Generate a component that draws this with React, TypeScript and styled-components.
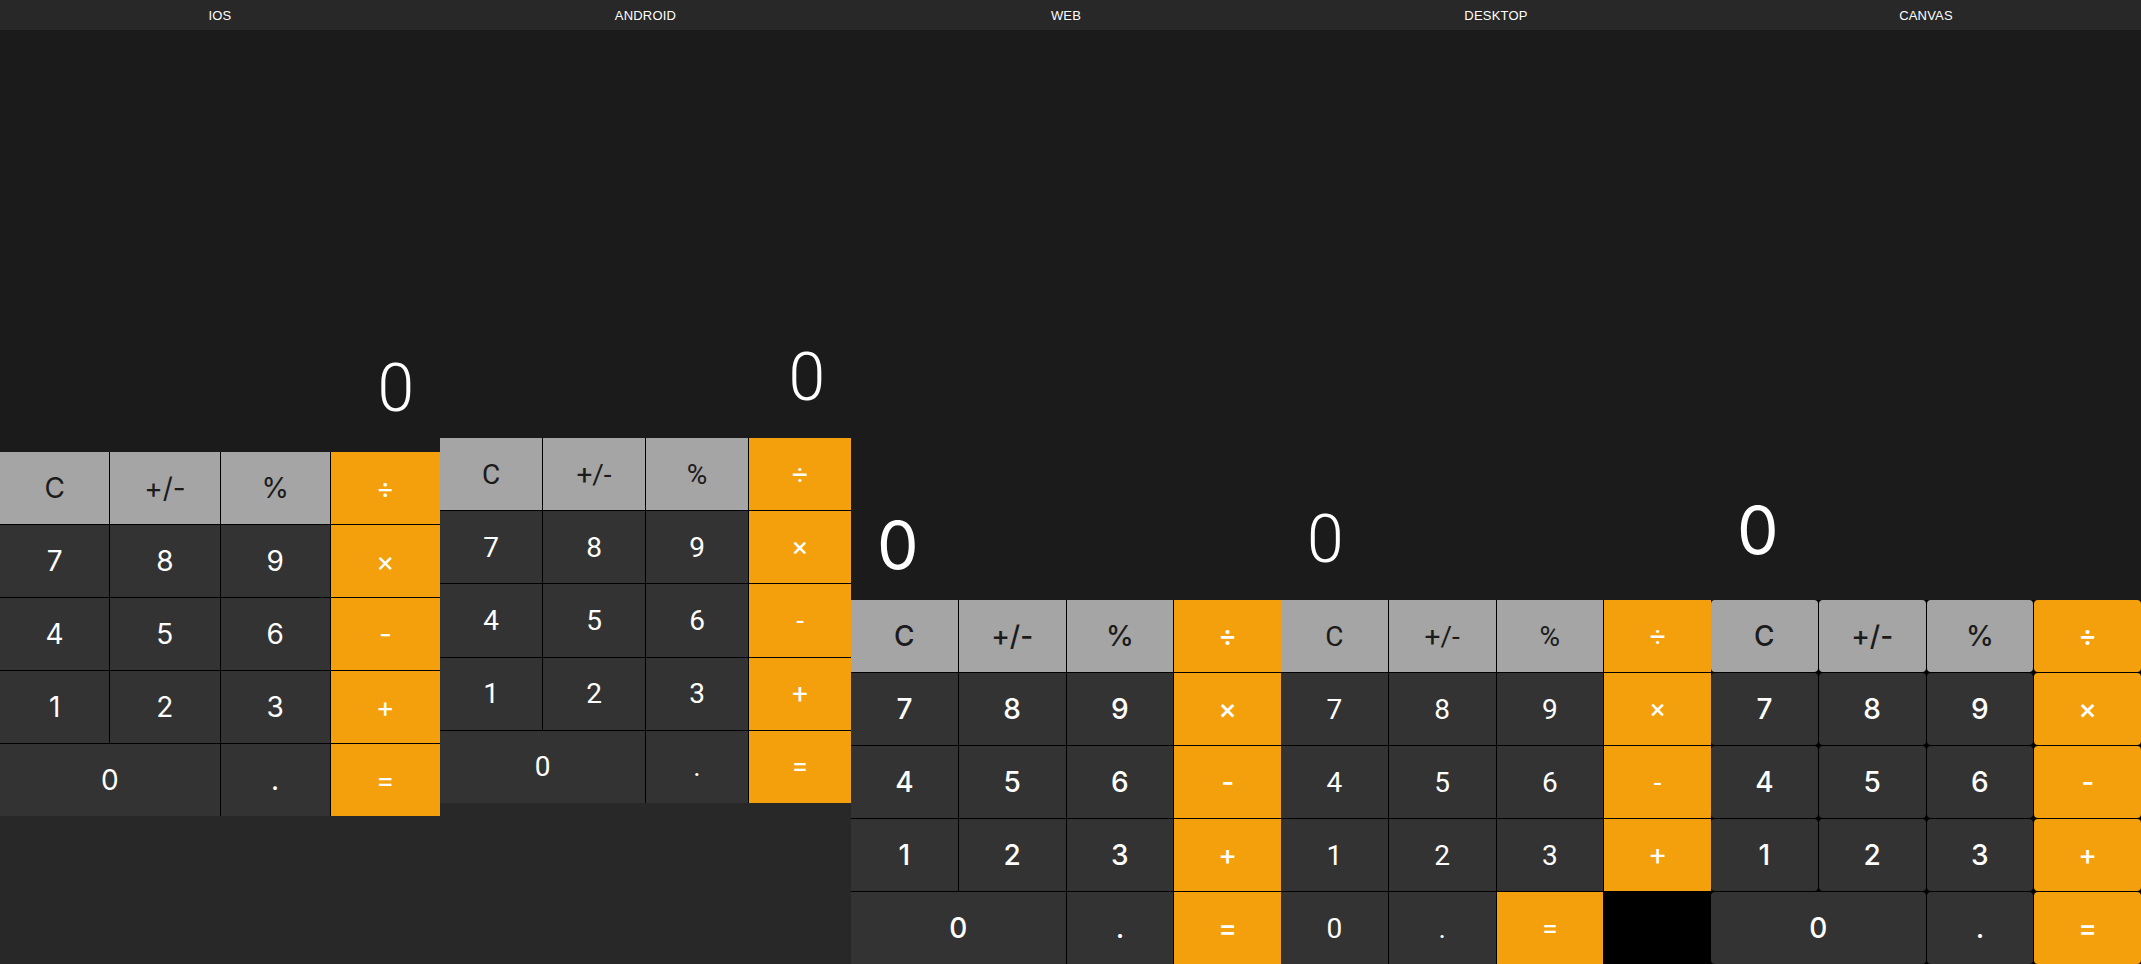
import * as React from 'react'
import styled, { createGlobalStyle } from 'styled-components'

const GlobalStyle = createGlobalStyle`
  html, body {
    margin: 0;
    padding: 0;
    background: #282828;
    font-family: 'Liberation Sans', Arial, sans-serif;
  }
  #root {
    height: 100vh;
  }
`

type KeyKind = 'fn' | 'num' | 'op' | 'blank'

interface IKey {
  label: string
  kind: KeyKind
  span?: number
}

interface IPlatform {
  name: string
  width: number
  displayHeight: number
  rowHeight: number
  align: 'left' | 'right'
  displayFont: string
  displayWeight: number
  displayPadBottom: number
  keyFont: string
  keyWeight: number
  rounded?: boolean
  keys: IKey[]
}

const topRows: IKey[] = [
  { label: 'C', kind: 'fn' },
  { label: '+/-', kind: 'fn' },
  { label: '%', kind: 'fn' },
  { label: '÷', kind: 'op' },
  { label: '7', kind: 'num' },
  { label: '8', kind: 'num' },
  { label: '9', kind: 'num' },
  { label: '×', kind: 'op' },
  { label: '4', kind: 'num' },
  { label: '5', kind: 'num' },
  { label: '6', kind: 'num' },
  { label: '-', kind: 'op' },
  { label: '1', kind: 'num' },
  { label: '2', kind: 'num' },
  { label: '3', kind: 'num' },
  { label: '+', kind: 'op' }
]

const wideZeroRow: IKey[] = [
  { label: '0', kind: 'num', span: 2 },
  { label: '.', kind: 'num' },
  { label: '=', kind: 'op' }
]

// desktop build leaves the last cell empty
const desktopZeroRow: IKey[] = [
  { label: '0', kind: 'num' },
  { label: '.', kind: 'num' },
  { label: '=', kind: 'op' },
  { label: '', kind: 'blank' }
]

const platforms: IPlatform[] = [
  {
    name: 'IOS',
    width: 440,
    displayHeight: 422,
    rowHeight: 72,
    align: 'right',
    displayFont: 'Roboto',
    displayWeight: 300,
    displayPadBottom: 30,
    keyFont: 'Inter',
    keyWeight: 400,
    keys: topRows.concat(wideZeroRow)
  },
  {
    name: 'ANDROID',
    width: 411,
    displayHeight: 408,
    rowHeight: 72.2,
    align: 'right',
    displayFont: 'Roboto',
    displayWeight: 300,
    displayPadBottom: 27,
    keyFont: 'Roboto',
    keyWeight: 400,
    keys: topRows.concat(wideZeroRow)
  },
  {
    name: 'WEB',
    width: 430,
    displayHeight: 570,
    rowHeight: 72,
    align: 'left',
    displayFont: 'Inter',
    displayWeight: 400,
    displayPadBottom: 22,
    keyFont: 'Inter',
    keyWeight: 500,
    keys: topRows.concat(wideZeroRow)
  },
  {
    name: 'DESKTOP',
    width: 430,
    displayHeight: 570,
    rowHeight: 72,
    align: 'left',
    displayFont: 'Roboto',
    displayWeight: 300,
    displayPadBottom: 27,
    keyFont: 'Roboto',
    keyWeight: 400,
    keys: topRows.concat(desktopZeroRow)
  },
  {
    name: 'CANVAS',
    width: 430,
    displayHeight: 570,
    rowHeight: 72,
    align: 'left',
    displayFont: 'Inter',
    displayWeight: 400,
    displayPadBottom: 37,
    keyFont: 'Inter',
    keyWeight: 500,
    rounded: true,
    keys: topRows.concat(wideZeroRow)
  }
]

const Page = styled('div')`
  display: flex;
  flex-direction: row;
  align-items: stretch;
  height: 100%;
  background: #282828;
  overflow: hidden;
`

const Panel = styled('div')<{ $width: number }>`
  display: flex;
  flex-direction: column;
  width: ${p => p.$width}px;
  flex: 0 0 ${p => p.$width}px;
`

const Tab = styled('div')`
  height: 30px;
  display: flex;
  align-items: center;
  justify-content: center;
  background: #282828;
  color: #ffffff;
  font-family: 'Liberation Sans', Arial, sans-serif;
  font-size: 13px;
  letter-spacing: 0.2px;
`

const Display = styled('div')<{ $height: number, $align: 'left' | 'right', $font: string, $weight: number, $padBottom: number }>`
  height: ${p => p.$height}px;
  box-sizing: border-box;
  display: flex;
  align-items: flex-end;
  justify-content: ${p => p.$align === 'left' ? 'flex-start' : 'flex-end'};
  padding: 0 26px ${p => p.$padBottom}px 26px;
  background: #1b1b1b;
  color: #ffffff;
  font-family: '${p => p.$font}', 'Liberation Sans', sans-serif;
  font-weight: ${p => p.$weight};
  font-size: 66px;
  line-height: 1;
`

const Keypad = styled('div')<{ $rowHeight: number }>`
  display: grid;
  grid-template-columns: repeat(4, 1fr);
  grid-auto-rows: ${p => p.$rowHeight}px;
  gap: 1px;
  background: #000000;
`

const keyColours: Record<KeyKind, { bg: string, fg: string }> = {
  fn: { bg: '#a5a5a5', fg: '#1b1b1b' },
  num: { bg: '#333333', fg: '#ffffff' },
  op: { bg: '#f49f0c', fg: '#ffffff' },
  blank: { bg: '#000000', fg: '#000000' }
}

const Key = styled('button')<{ $kind: KeyKind, $span: number, $font: string, $weight: number, $rounded: boolean }>`
  grid-column: span ${p => p.$span};
  display: flex;
  align-items: center;
  justify-content: center;
  border: none;
  padding: 0;
  margin: 0;
  border-radius: ${p => p.$rounded && p.$kind !== 'blank' ? '4px' : '0'};
  background: ${p => keyColours[p.$kind].bg};
  color: ${p => keyColours[p.$kind].fg};
  font-family: '${p => p.$font}', 'Liberation Sans', sans-serif;
  font-weight: ${p => p.$weight};
  font-size: 28px;
  cursor: pointer;
`

function Calculator ({ platform }: { platform: IPlatform }) {
  return (
    <Panel $width={platform.width}>
      <Tab>{platform.name}</Tab>
      <Display
        $height={platform.displayHeight}
        $align={platform.align}
        $font={platform.displayFont}
        $weight={platform.displayWeight}
        $padBottom={platform.displayPadBottom}
      >
        0
      </Display>
      <Keypad $rowHeight={platform.rowHeight}>
        { platform.keys.map((key, index) => (
          <Key
            key={index}
            $kind={key.kind}
            $span={key.span || 1}
            $font={platform.keyFont}
            $weight={platform.keyWeight}
            $rounded={!!platform.rounded}
          >
            {key.label}
          </Key>
        ))}
      </Keypad>
    </Panel>
  )
}

export default function App () {
  return (
    <>
      <GlobalStyle />
      <Page>
        { platforms.map((platform) => (
          <Calculator key={platform.name} platform={platform} />
        ))}
      </Page>
    </>
  )
}
